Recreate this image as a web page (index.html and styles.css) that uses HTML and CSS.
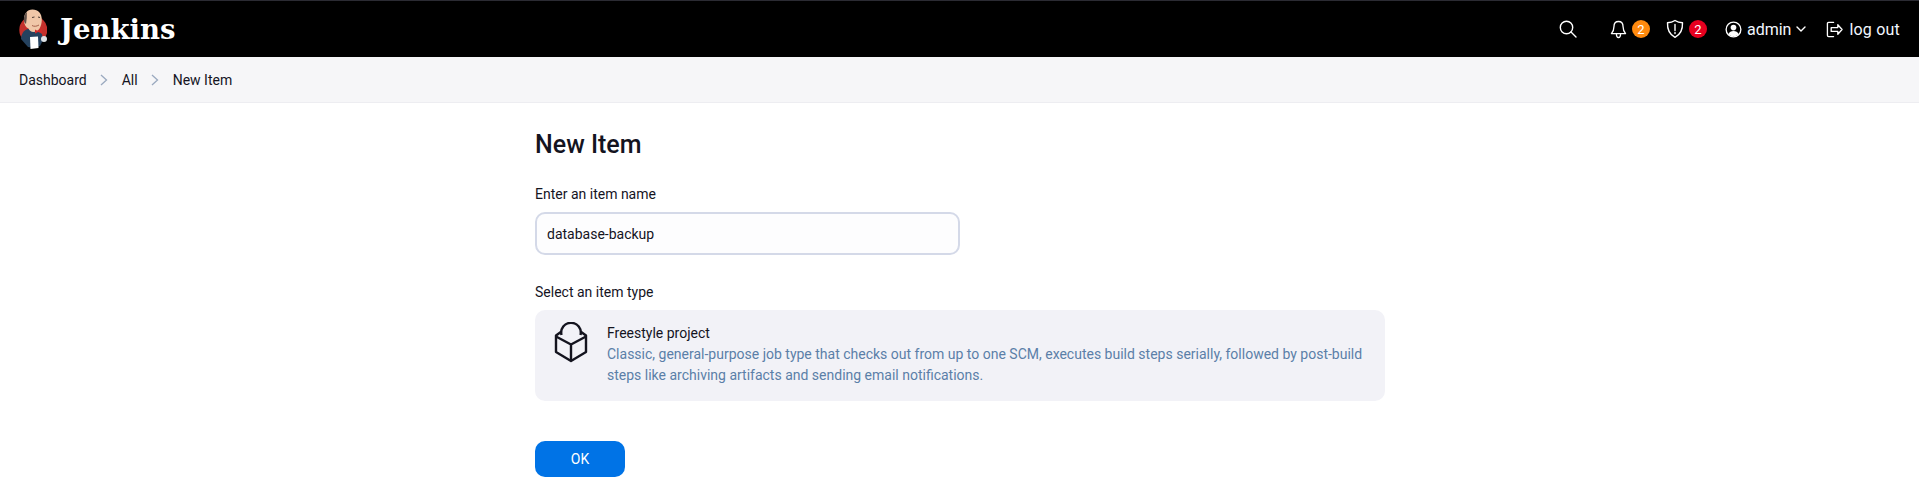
FILE: index.html
```html
<!DOCTYPE html>
<html lang="en">
<head>
    <meta charset="UTF-8">
    <title>New Item - Jenkins</title>
    <link rel="stylesheet" href="styles.css">
</head>
<body>
    <header class="top-bar">
        <a class="brand" href="#">
            <svg class="brand-logo" viewBox="0 0 28 40" width="28" height="40">
                <circle cx="14.300" cy="21" r="14" fill="#c4302b"/>
                <path d="M2 30c0-5 3-9 7-10l8 1 6 4 1 6-3 6-6 2-6-1z" fill="#25425f"/>
                <path d="M5 12C4.500 5 8 .5 13.500.5S23 4.500 22.800 11c-.2 7-3.300 12-8.300 12-2.500 0-4-1.200-5-3.500C7 18.500 5.200 15.500 5 12z" fill="#f0c7a8"/>
                <path d="M5 12C4.500 8 6 4.500 8 3c-.5 3 .2 6-.5 8l-.5 4c-1-.8-1.800-1.800-2-3z" fill="#5f4f48"/>
                <path d="M13 8.500l2.500-.5M19 8l2 .5" fill="none" stroke="#4a3a33" stroke-width="1"/>
                <path d="M13 16.500c2 1.200 4.500 1 7-.5" fill="none" stroke="#a5614a" stroke-width="1"/>
                <path d="M16 20.500l3 1.500 4-2v4l-4-1-3 1.500z" fill="#d42b2b"/>
                <path d="M11 28l8-.5.500 11.500-8 1z" fill="#fff"/>
                <circle cx="25" cy="30" r="3" fill="#dfe3e6"/>
            </svg>
            <span class="brand-name">Jenkins</span>
        </a>
        <nav class="top-actions">
            <svg class="icon search-icon" viewBox="0 0 18 18" width="18" height="18">
                <circle cx="7.5" cy="7.5" r="6.200"/>
                <path d="M12 12l5 5"/>
            </svg>
            <span class="action bell-action">
                <svg class="icon" viewBox="0 0 18 20" width="17" height="19">
                    <path d="M9 1.500c-3 0-4.800 2.200-4.800 5.200 0 4.300-1.200 5.800-2.700 7.600h15c-1.500-1.800-2.700-3.300-2.700-7.600 0-3-1.800-5.200-4.800-5.200z"/>
                    <path d="M6.800 14.500c0 2.800 1 4 2.200 4s2.200-1.200 2.200-4"/>
                </svg>
                <span class="badge badge-orange">2</span>
            </span>
            <span class="action shield-action">
                <svg class="icon" viewBox="0 0 18 20" width="18" height="20">
                    <path d="M9 1.500c2.300 1.500 4.700 2.200 7.500 2.300 0.300 6.900-1.800 11.700-7.500 14.500C3.300 15.500 1.200 10.700 1.500 3.800 4.300 3.700 6.700 3 9 1.500z"/>
                    <path d="M9 5.500v6M9 13.500v1"/>
                </svg>
                <span class="badge badge-red">2</span>
            </span>
            <span class="action user-action">
                <svg class="user-icon" viewBox="0 0 18 18" width="17" height="17">
                    <circle cx="9" cy="9" r="7.800" fill="none" stroke="#fff" stroke-width="1.400"/>
                    <circle cx="9" cy="7" r="3" fill="#fff"/>
                    <path d="M3.500 14c1-2.500 3-3.500 5.500-3.500s4.500 1 5.500 3.500c-1.500 1.500-3.500 2.200-5.500 2.200s-4-0.700-5.500-2.200z" fill="#fff"/>
                </svg>
                <span class="action-text">admin</span>
                <svg class="icon chevron-icon" viewBox="0 0 10 6" width="10" height="6">
                    <path d="M1 1l4 4 4-4"/>
                </svg>
            </span>
            <span class="action logout-action">
                <svg class="icon" viewBox="0 0 18 18" width="17" height="17">
                    <path d="M8 1.500H2.800c-.8 0-1.300.5-1.300 1.300v12.400c0 .8.500 1.300 1.300 1.300H8"/>
                    <path d="M5.500 7h7V4l4.500 5-4.500 5v-3h-7z"/>
                </svg>
                <span class="action-text logout-text">log out</span>
            </span>
        </nav>
    </header>

    <div class="breadcrumbs">
        <span class="crumb">Dashboard</span>
        <svg class="crumb-sep" viewBox="0 0 8 12" width="8" height="12"><path d="M1 1l5.500 5L1 11"/></svg>
        <span class="crumb">All</span>
        <svg class="crumb-sep" viewBox="0 0 8 12" width="8" height="12"><path d="M1 1l5.500 5L1 11"/></svg>
        <span class="crumb">New Item</span>
    </div>

    <main class="page">
        <h1 class="page-title">New Item</h1>
        <label class="field-label" for="name">Enter an item name</label>
        <input class="name-input" id="name" type="text" value="database-backup">
        <div class="field-label type-label">Select an item type</div>
        <div class="type-card">
            <svg class="type-icon" viewBox="0 0 34 41" width="34" height="41">
                <path d="M17 22.500v16.500M2 14.500l15 8 15-8"/>
                <path d="M7.500 13a9.800 9.800 0 1 1 19 0"/>
                <path d="M7.500 9.500L2 13.500v16.500L17 39l15-9V13.500l-5.500-4"/>
            </svg>
            <div class="type-text">
                <div class="type-name">Freestyle project</div>
                <div class="type-desc">Classic, general-purpose job type that checks out from up to one SCM, executes build steps serially, followed by post-build steps like archiving artifacts and sending email notifications.</div>
            </div>
        </div>
        <button class="ok-button">OK</button>
    </main>
</body>
</html>
```

FILE: styles.css
```css
* {
    box-sizing: border-box;
}

body {
    margin: 0;
    background: #fff;
    color: #14141f;
    font-family: Roboto, "Noto Sans", sans-serif;
    font-size: 14px;
    overflow: hidden;
}

.top-bar {
    display: flex;
    align-items: center;
    justify-content: space-between;
    height: 57px;
    padding: 0 19px;
    background: #000;
    border-top: 1px solid #2b2b33;
}

.brand {
    display: flex;
    align-items: center;
    gap: 13px;
    color: #fff;
    text-decoration: none;
}

.brand-name {
    font-family: "DejaVu Serif", serif;
    font-size: 27.500px;
    font-weight: 700;
}

.top-actions {
    display: flex;
    align-items: center;
    color: #fff;
}

.icon {
    fill: none;
    stroke: #fff;
    stroke-width: 1.400;
    stroke-linecap: round;
    stroke-linejoin: round;
}

.action {
    display: flex;
    align-items: center;
}

.bell-action {
    margin-left: 33px;
    gap: 5px;
}

.shield-action {
    margin-left: 16px;
    gap: 5px;
}

.user-action {
    margin-left: 18px;
    gap: 5px;
}

.logout-action {
    margin-left: 20px;
    gap: 6px;
}

.action-text {
    font-size: 16px;
    color: #f2f7ff;
}

.logout-text {
    letter-spacing: 0.2px;
}

.badge {
    display: flex;
    align-items: center;
    justify-content: center;
    width: 18px;
    height: 18px;
    border-radius: 50%;
    font-size: 13px;
    color: #fff;
}

.badge-orange {
    background: #ff8a0e;
}

.badge-red {
    background: #e6001f;
}

.breadcrumbs {
    display: flex;
    align-items: center;
    height: 46px;
    padding: 0 19px;
    background: #f6f6f8;
    border-bottom: 1px solid #ededf1;
}

.crumb {
    font-size: 14px;
}

.crumb-sep {
    margin: 0 14px 0 13px;
    fill: none;
    stroke: #9aa9bf;
    stroke-width: 1.300;
}

.page {
    display: flex;
    flex-direction: column;
    align-items: flex-start;
    width: 850px;
    margin-left: 535px;
    padding-top: 26px;
}

.page-title {
    margin: 0 0 23px;
    font-size: 25px;
    font-weight: 500;
    line-height: 32px;
}

.field-label {
    font-size: 14px;
    line-height: 20px;
    margin-bottom: 8px;
}

.name-input {
    width: 425px;
    height: 43px;
    padding: 0 10px;
    background: #fdfdfe;
    border: 2px solid #d4d9e8;
    border-radius: 10px;
    color: #14141f;
    font-family: inherit;
    font-size: 14px;
}

.type-label {
    margin-top: 27px;
    margin-bottom: 8px;
}

.type-card {
    display: flex;
    width: 100%;
    height: 91px;
    padding: 12px 20px 12px 19px;
    gap: 19px;
    background: #f2f2f7;
    border-radius: 10px;
}

.type-icon {
    flex: none;
    fill: none;
    stroke: #14141f;
    stroke-width: 2.400;
    stroke-linejoin: round;
}

.type-text {
    padding-top: 1px;
}

.type-name {
    font-size: 14px;
    line-height: 21px;
}

.type-desc {
    color: #5b7fa8;
    font-size: 14px;
    line-height: 21px;
}

.ok-button {
    width: 90px;
    height: 36px;
    margin-top: 40px;
    background: #0073e6;
    border: 0;
    border-radius: 10px;
    color: #fff;
    font-family: inherit;
    font-size: 14px;
}
```
